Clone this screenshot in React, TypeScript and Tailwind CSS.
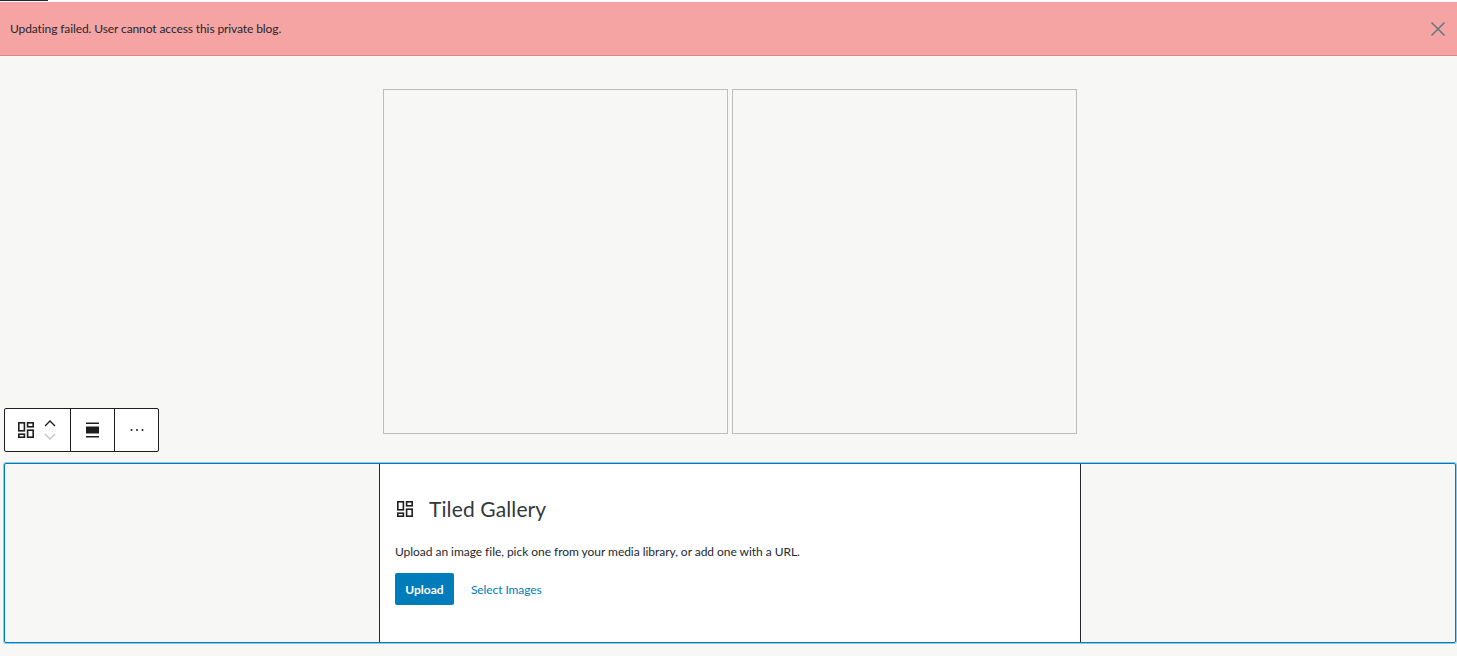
import React from "react";

const GalleryIcon = ({ className = "" }: { className?: string }) => (
  <svg viewBox="0 0 16 16" width="16" height="16" fill="none" stroke="#1e1e1e" strokeWidth="1.6" className={`shrink-0 ${className}`}>
    <rect x="0.8" y="0.8" width="5.6" height="8" />
    <rect x="9.6" y="0.8" width="5.6" height="4" />
    <rect x="0.8" y="12.2" width="5.6" height="3" />
    <rect x="9.6" y="8.2" width="5.6" height="7" />
  </svg>
);

export default function App() {
  return (
    <div className="relative w-[1457px] h-[656px] overflow-hidden bg-[#f7f7f5] font-['Lato','Open_Sans',sans-serif] text-[#23282d]">
      <div className="h-[2px] bg-white">
        <div className="h-px w-[48px] bg-[#23282d]" />
      </div>
      <div className="flex h-[54px] items-center justify-between border-b border-[#cf8a8a] bg-[#f6a3a3] pl-[10px] pr-[11px]">
        <span className="pt-[1px] text-[12px] tracking-[-0.1px]">Updating failed. User cannot access this private blog.</span>
        <svg width="16" height="16" viewBox="0 0 16 16" stroke="#5f7a80" strokeWidth="1.5" fill="none">
          <path d="M1.5 1.5 14.5 14.5M14.5 1.5 1.5 14.5" />
        </svg>
      </div>

      <div className="ml-[383px] mt-[33px] flex gap-[4px]">
        <div className="h-[345px] w-[345px] border border-[#bdbdbb]" />
        <div className="h-[345px] w-[345px] border border-[#bdbdbb]" />
      </div>

      <div className="absolute left-[4px] top-[408px] flex h-[44px] w-[155px] rounded-[2px] border border-[#1e1e1e] bg-white">
        <div className="flex w-[66px] items-center border-r border-[#1e1e1e] pl-[13px]">
          <GalleryIcon />
          <div className="ml-[10px] flex flex-col items-center gap-[6px]">
            <svg width="12" height="7" viewBox="0 0 12 7" fill="none" stroke="#1e1e1e" strokeWidth="1.4"><path d="M1 6 6 1l5 5" /></svg>
            <svg width="12" height="7" viewBox="0 0 12 7" fill="none" stroke="#c4c4c4" strokeWidth="1.4"><path d="M1 1l5 5 5-5" /></svg>
          </div>
        </div>
        <div className="flex w-[44px] items-center justify-center border-r border-[#1e1e1e]">
          <svg width="14" height="16" viewBox="0 0 14 16" fill="#1e1e1e">
            <rect x="0" y="0.5" width="13" height="1.5" />
            <rect x="0" y="4.5" width="13" height="7" />
            <rect x="0" y="14" width="13" height="1.5" />
          </svg>
        </div>
        <div className="flex flex-1 items-center justify-center">
          <svg width="14" height="4" viewBox="0 0 14 4" fill="#1e1e1e">
            <rect x="0.5" y="1" width="2" height="2" rx="1" />
            <rect x="6" y="1" width="2" height="2" rx="1" />
            <rect x="11.5" y="1" width="2" height="2" rx="1" />
          </svg>
        </div>
      </div>

      <div className="ml-[4px] mt-[29px] flex h-[180px] w-[1452px] rounded-[2px] border border-[#007cba] shadow-[0_0_0_1px_#8fcbe8]">
        <div className="w-[374px]" />
        <div className="flex w-[702px] flex-col border-x border-[#23282d] bg-white pl-[15px] pt-[33px]">
          <div className="flex h-[24px] items-center">
            <GalleryIcon className="ml-[2px]" />
            <span className="ml-[16px] text-[21px] leading-[24px] tracking-[0.12px] text-[#32373c]">Tiled Gallery</span>
          </div>
          <p className="mt-[22px] text-[12px] leading-[18px] tracking-[-0.04px]">Upload an image file, pick one from your media library, or add one with a URL.</p>
          <div className="mt-[12px] flex items-center">
            <button className="h-[32px] w-[59px] rounded-[2px] bg-[#007cba] pt-[1px] text-[12px] font-bold text-white">Upload</button>
            <button className="ml-[17px] pt-[1px] text-[12px] tracking-[-0.1px] text-[#007cba]">Select Images</button>
          </div>
        </div>
      </div>
    </div>
  );
}
